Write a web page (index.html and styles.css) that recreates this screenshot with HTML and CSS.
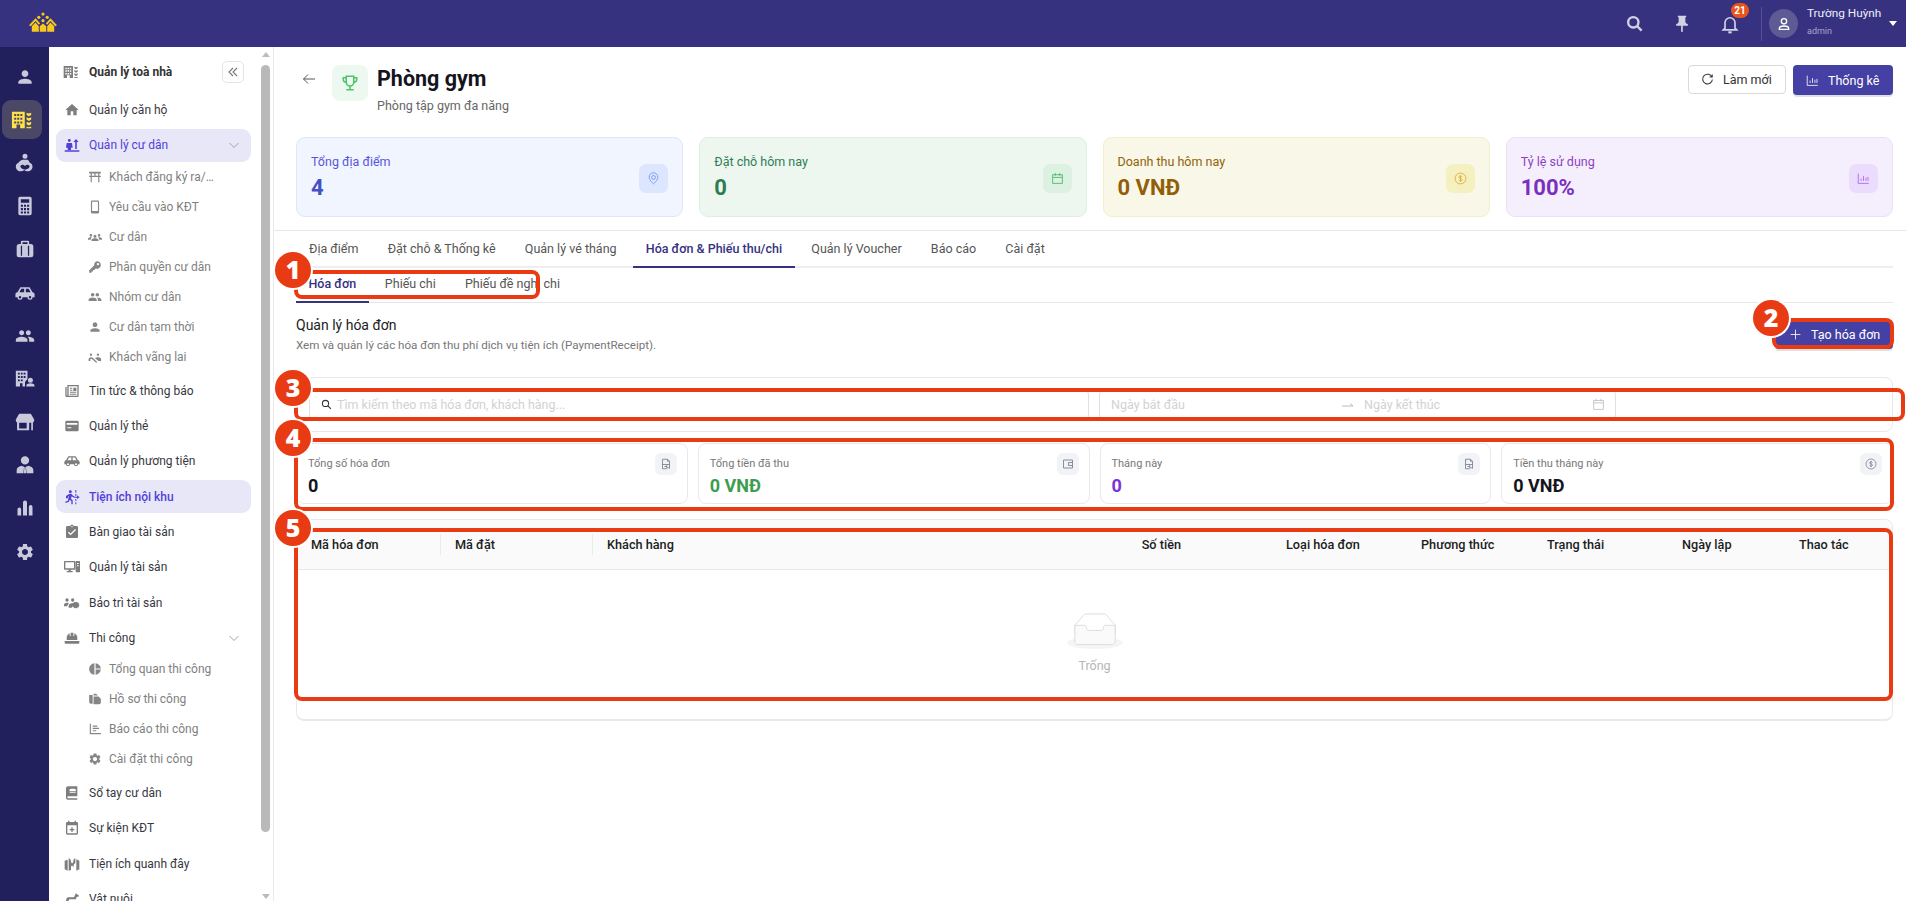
FILE: index.html
```html
<!DOCTYPE html>
<html lang="vi">
<head>
  <meta charset="UTF-8" />
  <meta name="viewport" content="width=device-width, initial-scale=1.0"/>
  <title>Phòng gym</title>
  <link rel="stylesheet" href="styles.css">
</head>
<body>
  <svg class="sprite" xmlns="http://www.w3.org/2000/svg">
    <symbol id="i-person" viewBox="0 0 24 24"><path d="M12 12c2.21 0 4-1.79 4-4s-1.79-4-4-4-4 1.79-4 4 1.79 4 4 4zm0 2c-2.67 0-8 1.34-8 4v2h16v-2c0-2.66-5.33-4-8-4z"/></symbol>
    <symbol id="i-building" viewBox="0 0 24 24"><path fill-rule="evenodd" d="M1 3h14v18h-5v-4H6v4H1zM3.500 5.500v2.200h2.200V5.500zm3.300 0v2.200H9V5.500zm3.400 0v2.200h2.200V5.500zM3.500 9.500v2.200h2.200V9.500zm3.300 0v2.200H9V9.500zm3.400 0v2.200h2.200V9.500zM3.500 13.500v2.200h2.200v-2.200zm3.300 0v2.200H9v-2.200zm3.400 0v2.200h2.200v-2.200z"/><path d="M17 4l2.500 1L22 4v2.500L19.500 8 17 6.500zM17 9l2.500 1L22 9v2.500L19.500 13 17 11.500zM17 14l2.500 1 2.500-1v2.500L19.500 18 17 16.500zM17 19l2.500 1 2.500-1v2h-5z"/></symbol>
    <symbol id="i-mother" viewBox="0 0 24 24"><path fill-rule="evenodd" d="M12 1a3 3 0 1 1 0 6 3 3 0 0 1 0-6zM8.500 8h7c1 1 1.500 2 2 3.500 2 .8 3.500 2.500 3.500 5 0 3-2.500 5.500-5.500 5.500-2 0-3.500-.7-4.500-1.500-1 .8-2.500 1.500-4.500 1.500C3.500 22 1 19.500 1 16.500c0-2.500 1.500-4.200 3.500-5 .7-1.500 2-2.500 4-3.500zM9 14c-1.500 0-2.500 1-2.500 2.200S8 19 12 20c4-1 5.500-2.600 5.500-3.800S16.500 14 15 14c-1.300 0-2.300.7-3 1.700-.7-1-1.700-1.700-3-1.700z"/></symbol>
    <symbol id="i-calc" viewBox="0 0 24 24"><path fill-rule="evenodd" d="M6 1h12a2 2 0 0 1 2 2v18a2 2 0 0 1-2 2H6a2 2 0 0 1-2-2V3a2 2 0 0 1 2-2zm1 3v4h10V4zm0 6.500V13h2.500v-2.500zm3.800 0V13h2.400v-2.500zm3.700 0V13H17v-2.500zM7 14.500V17h2.500v-2.500zm3.800 0V17h2.400v-2.500zm3.700 0V17H17v-2.500zM7 18.500V21h2.500v-2.500zm3.800 0V21h2.400v-2.500zm3.700 0V21H17v-2.500z"/></symbol>
    <symbol id="i-case" viewBox="0 0 24 24"><path fill-rule="evenodd" d="M8.500 2h7A1.500 1.500 0 0 1 17 3.500V6h2a3 3 0 0 1 3 3v10a3 3 0 0 1-3 3H5a3 3 0 0 1-3-3V9a3 3 0 0 1 3-3h2V3.500A1.500 1.500 0 0 1 8.500 2zM9 4v2h6V4zM7 8v12h1.500V8zm8.500 0v12H17V8z"/></symbol>
    <symbol id="i-car" viewBox="0 0 24 24"><path fill-rule="evenodd" d="M6.500 5h11l3.500 6c1.500.3 2.500 1.300 2.500 2.800V17H21a3 3 0 0 1-6 0H9a3 3 0 0 1-6 0H.5v-3.200C.5 12.300 1.500 11.300 3 11zm1 1.800L5.300 11H11V6.800zm5.500 0V11h5.700l-2.200-4.200zM6 15.500a1.500 1.500 0 1 0 0 3 1.500 1.500 0 0 0 0-3zm12 0a1.500 1.500 0 1 0 0 3 1.500 1.500 0 0 0 0-3z"/></symbol>
    <symbol id="i-group" viewBox="0 0 24 24"><path d="M16 11c1.660 0 2.990-1.340 2.990-3S17.660 5 16 5c-1.660 0-3 1.340-3 3s1.340 3 3 3zm-8 0c1.660 0 2.990-1.340 2.990-3S9.660 5 8 5C6.340 5 5 6.340 5 8s1.340 3 3 3zm0 2c-2.330 0-7 1.170-7 3.500V19h14v-2.500c0-2.330-4.670-3.500-7-3.500zm8 0c-.29 0-.62.02-.97.05 1.160.84 1.970 1.970 1.970 3.450V19h6v-2.500c0-2.330-4.670-3.500-7-3.500z"/></symbol>
    <symbol id="i-office" viewBox="0 0 24 24"><path fill-rule="evenodd" d="M1 2h14v10.500c-1.800.6-3 2.300-3 4.500v4H9v-4H6v4H1zM3.500 4.500v2.200h2.200V4.500zm3.500 0v2.200h2.200V4.500zm3.400 0v2.200h2.200V4.500zM3.500 8.500v2.200h2.200V8.500zm3.500 0v2.200h2.200V8.500zm3.400 0v2.200h2.200V8.500zM3.500 12.500v2.200h2.200v-2.200zm3.500 0v2.200h2.200v-2.200z"/><path d="M18.500 10.500a3 3 0 1 1 0 6 3 3 0 0 1 0-6zM13.500 21v-1c0-2 3-2.800 5-2.800s5 .8 5 2.800v1z"/></symbol>
    <symbol id="i-store" viewBox="0 0 24 24"><path fill-rule="evenodd" d="M5 2h14l4 7v1.500a2.500 2.500 0 0 1-1.500 2V22H2.500v-9.500A2.500 2.500 0 0 1 1 10.500V9zM5 13v6.800h9V13zm12 0v9h2.500v-9z"/></symbol>
    <symbol id="i-tie" viewBox="0 0 24 24"><path d="M12 1.500a5 5 0 1 1 0 10 5 5 0 0 1 0-10zM7.500 13l3.500 1-1 8H2v-4c0-2.600 2.800-4.200 5.500-5zM16.500 13c2.700.8 5.500 2.400 5.500 5v4h-8l-1-8zM11.300 14.500h1.400l.8 7.500h-3z"/></symbol>
    <symbol id="i-bars" viewBox="0 0 24 24"><path d="M5.200 11.500A2.200 2.200 0 0 1 7.400 13.700V21H3v-7.300a2.200 2.200 0 0 1 2.200-2.200zM12 3a2.400 2.400 0 0 1 2.400 2.400V21H9.600V5.400A2.400 2.400 0 0 1 12 3zM18.800 8.500A2.200 2.200 0 0 1 21 10.700V21h-4.400V10.700a2.200 2.200 0 0 1 2.200-2.200z"/></symbol>
    <symbol id="i-gear" viewBox="0 0 24 24"><path d="M19.140 12.940c.04-.3.06-.61.06-.94 0-.32-.02-.64-.07-.94l2.030-1.580c.18-.14.23-.41.12-.61l-1.920-3.320c-.12-.22-.37-.29-.59-.22l-2.390.96c-.5-.38-1.030-.7-1.620-.94l-.36-2.540c-.04-.24-.24-.41-.48-.41h-3.840c-.24 0-.43.17-.47.41l-.36 2.540c-.59.24-1.130.57-1.620.94l-2.390-.96c-.22-.08-.47 0-.59.22L2.740 8.870c-.12.21-.08.47.12.61l2.030 1.580c-.05.3-.09.63-.09.94s.02.64.07.94l-2.030 1.580c-.18.14-.23.41-.12.61l1.920 3.320c.12.22.37.29.59.22l2.390-.96c.5.38 1.030.7 1.620.94l.36 2.540c.05.24.24.41.48.41h3.840c.24 0 .44-.17.47-.41l.36-2.540c.59-.24 1.130-.56 1.620-.94l2.390.96c.22.08.47 0 .59-.22l1.920-3.320c.12-.22.07-.47-.12-.61l-2.010-1.580zM12 15.600c-1.980 0-3.600-1.620-3.600-3.600s1.620-3.600 3.600-3.600 3.600 1.620 3.600 3.600-1.620 3.600-3.600 3.600z"/></symbol>
    <symbol id="i-home" viewBox="0 0 24 24"><path d="M10 20v-6h4v6h5v-8h3L12 3 2 12h3v8z"/></symbol>
    <symbol id="i-resident" viewBox="0 0 24 24"><path d="M8 3a2.200 2.200 0 1 1 0 4.400A2.200 2.200 0 0 1 8 3zM4 9h8l1 7h-2.500v3.500h-5V16H3zM18 3l4 4.500h-2.800V18h-2.400V7.500H14zM1 20h22v2H1z"/></symbol>
    <symbol id="i-torii" viewBox="0 0 24 24"><path fill-rule="evenodd" d="M2 3h20v3h-2.500v4H22v2h-2.500v9h-2v-9h-11v9h-2v-9H2v-2h2.500V6H2zm4.500 3v4H11V6zM13 6v4h4.500V6z"/></symbol>
    <symbol id="i-phone" viewBox="0 0 24 24"><path d="M17 1.010L7 1c-1.100 0-2 .9-2 2v18c0 1.100.9 2 2 2h10c1.100 0 2-.9 2-2V3c0-1.100-.9-1.990-2-1.990zM17 19H7V3h10v16z"/></symbol>
    <symbol id="i-people" viewBox="0 0 24 24"><path d="M12 8a2.600 2.600 0 1 1 0 5.200A2.600 2.600 0 0 1 12 8zM5 7a2.200 2.200 0 1 1 0 4.400A2.200 2.200 0 0 1 5 7zM19 7a2.200 2.200 0 1 1 0 4.400A2.200 2.200 0 0 1 19 7zM6 19v-2c0-1.800 3.500-2.800 6-2.800s6 1 6 2.800v2zM0 16.500V15c0-1.400 2.700-2.400 5-2.400.6 0 1.200.1 1.800.2-1.300.8-2 1.800-2 3.700zM24 16.500V15c0-1.400-2.700-2.400-5-2.400-.6 0-1.200.1-1.800.2 1.300.8 2 1.800 2 3.700z"/></symbol>
    <symbol id="i-key" viewBox="0 0 24 24"><path fill-rule="evenodd" d="M15.500 2a6.500 6.500 0 1 1-2.300 12.600L11 17H8.500v2.500H6V22H2v-4l8.800-8.800A6.500 6.500 0 0 1 15.500 2zM17 5a2 2 0 1 0 0 4 2 2 0 0 0 0-4z"/></symbol>
    <symbol id="i-walk" viewBox="0 0 24 24"><path d="M5 6a2 2 0 1 1 0 4 2 2 0 0 1 0-4zM17 6a2 2 0 1 1 0 4 2 2 0 0 1 0-4zM1 19v-3c0-2 2.500-3.500 4.500-3.500 1 0 2 .3 2.700.9L16 21l-2 1-8-7-2 1v3zM12 14c1-1 3-1.500 5-1.500 2.500 0 5.500 1 5.500 3.500v3H18z"/></symbol>
    <symbol id="i-news" viewBox="0 0 24 24"><path fill-rule="evenodd" d="M5 3h17v16a2 2 0 0 1-2 2H4a2 2 0 0 1-2-2V6h2v12.500a.5.500 0 0 0 1 0zm2 2v14h13V5zm7 2h4.500v5H14zM9 7h3.500v1.500H9zm0 3h3.500v1.500H9zm0 3h9.500v1.500H9zm0 3h9.500v1.500H9z"/></symbol>
    <symbol id="i-card" viewBox="0 0 24 24"><path fill-rule="evenodd" d="M4 4h16a2 2 0 0 1 2 2v12a2 2 0 0 1-2 2H4a2 2 0 0 1-2-2V6a2 2 0 0 1 2-2zm0 3.500V10h16V7.500zM5 14v1.500h6V14z"/></symbol>
    <symbol id="i-run" viewBox="0 0 24 24"><path d="M9.500 2a2.200 2.200 0 1 1 0 4.400A2.200 2.200 0 0 1 9.500 2zM7 8l4-1 2.500 3 2 1v2l-3-1.200-1-1-1 4 2.500 2V23h-2v-5l-2.500-2-1 3-5 2-.7-1.800 4-1.700 1.500-7-1.300.7V14H3v-3.500zM17 1.500h1.500v4H17zM17 7.500h1.500v3H17zM17 15h1.500v3H17zM17 20h1.500v3H17zM19.500 9.500l4 2.800-4 2.700V13H15v-1.500h4.500z"/></symbol>
    <symbol id="i-clipboard" viewBox="0 0 24 24"><path d="M19 3h-4.180C14.400 1.840 13.300 1 12 1c-1.300 0-2.400.84-2.820 2H5c-1.100 0-2 .9-2 2v14c0 1.100.9 2 2 2h14c1.100 0 2-.9 2-2V5c0-1.100-.9-2-2-2zm-7 0c.55 0 1 .45 1 1s-.45 1-1 1-1-.45-1-1 .45-1 1-1zm-2 14l-4-4 1.410-1.410L10 14.170l6.590-6.590L18 9l-8 8z"/></symbol>
    <symbol id="i-devices" viewBox="0 0 24 24"><path fill-rule="evenodd" d="M1 3h15a1 1 0 0 1 1 1v11a1 1 0 0 1-1 1H10v2h3v2H4v-2h3v-2H1a1 1 0 0 1-1-1V4a1 1 0 0 1 1-1zm1 2v9h13V5zM18.500 3H23a1 1 0 0 1 1 1v15a1 1 0 0 1-1 1h-4.500a1 1 0 0 1-1-1V4a1 1 0 0 1 1-1zm1 3v1.500h2.500V6zm0 3.500V11h2.500V9.500z"/></symbol>
    <symbol id="i-team" viewBox="0 0 24 24"><path d="M4.500 5a2.500 2.500 0 1 1 0 5 2.500 2.500 0 0 1 0-5zM13 5a2.500 2.500 0 1 1 0 5 2.500 2.500 0 0 1 0-5zM0 17v-2.500c0-2 2.500-3 4.500-3 1 0 2 .2 2.800.6L4.500 17zM7 19v-3c0-2.500 3.500-4 6-4 .8 0 1.800.2 2.700.5L11.500 19zM19.500 10l1 1.700 2 .3-.5 1.800 1.500 1.300-1.500 1.300.5 1.800-2 .3-1 1.700-1.800-1-1.800 1-1-1.700-2-.3.500-1.800-1.500-1.300 1.500-1.300-.5-1.800 2-.3 1-1.700 1.800 1z"/></symbol>
    <symbol id="i-helmet" viewBox="0 0 24 24"><path d="M10 4h4v5h1.500V4.800A8 8 0 0 1 20 12v3H4v-3a8 8 0 0 1 4.500-7.200V9H10zM1 16.500h22V19a1.500 1.500 0 0 1-1.500 1.500h-19A1.500 1.500 0 0 1 1 19z"/></symbol>
    <symbol id="i-pie" viewBox="0 0 24 24"><path d="M11 2v20c-5.070-.5-9-4.790-9-10s3.930-9.500 9-10zm2.030 0v8.990H22c-.47-4.740-4.240-8.520-8.970-8.990zm0 11.010V22c4.740-.47 8.500-4.250 8.970-8.990h-8.970z"/></symbol>
    <symbol id="i-files" viewBox="0 0 24 24"><path d="M2 5h6v15H5a3 3 0 0 1-3-3zM9.500 3H14l3 3H9.500zM9.500 7.500H18l4 4V18a3 3 0 0 1-3 3H9.500z"/></symbol>
    <symbol id="i-report" viewBox="0 0 24 24"><path d="M3 3h2v16h17v2H3zM8 6h8v2H8zM8 10h11v2H8zM8 14h6v2H8z"/></symbol>
    <symbol id="i-book" viewBox="0 0 24 24"><path fill-rule="evenodd" d="M6 2h14v15H6.500a1.500 1.500 0 0 0 0 3H20v2H6a3 3 0 0 1-3-3V5a3 3 0 0 1 3-3zm2.500 8v1.500h9V10zm2-4.500a2.500 2.500 0 0 0-2 3.500h9a2.500 2.500 0 0 0-2-3.500z"/></symbol>
    <symbol id="i-event" viewBox="0 0 24 24"><path fill-rule="evenodd" d="M6 1h2v2h8V1h2v2h1a2 2 0 0 1 2 2v15a2 2 0 0 1-2 2H5a2 2 0 0 1-2-2V5a2 2 0 0 1 2-2h1zM5 8v12h14V8zm6 3h2v2.500h2.500v2H13V18h-2v-2.500H8.500v-2H11z"/></symbol>
    <symbol id="i-map" viewBox="0 0 24 24"><path d="M7 3l3 2.500c0 2 1 4 2 6l2-3V5.500L17 3v8l-2 1-1 5-2-3-1.500 2V21L7 22zM5.500 5.500V22L1 20V7zM18.500 5L23 7v13l-4.500 2z"/></symbol>
    <symbol id="i-pet" viewBox="0 0 24 24"><path d="M18 3l1 2 3 1v2.500h-3l-1 4H8l-3 6H2l2-8 2-1h9z"/></symbol>
    <symbol id="i-pin" viewBox="0 0 24 24"><path d="M16 9V4h1V2H7v2h1v5c0 1.660-1.340 3-3 3v2h5.970v7l1 1 1-1v-7H19v-2c-1.660 0-3-1.340-3-3z"/></symbol>
    <symbol id="i-file" viewBox="0 0 24 24"><path d="M5 2.500h10l4 4V21l-2-1.500h-3.500V13H19M5 2.500V21.500h8.500M5 13h8.500M9 17h4.500M15 2.500V6.500h4" fill="none" stroke="currentColor" stroke-width="1.800"/></symbol>
  </svg>

  <header class="topbar">
    <svg class="logo" viewBox="0 0 30 22">
      <circle cx="15" cy="2" r="1.700"/><circle cx="10.500" cy="5.500" r="1.700"/><circle cx="19.500" cy="5.500" r="1.700"/><circle cx="15" cy="9" r="1.700"/>
      <path d="M0 14L7 6.500 12 12 10.500 13.500 7 9.500 2 15zM30 14L23 6.500 18 12 19.500 13.500 23 9.500 28 15z"/>
      <path d="M3 21v-6l4-4 3.500 4v6zM11.500 21v-6l3.500-3 3.500 3v6zM19.500 21v-6L23 11l4 4v6z"/>
    </svg>
    <div class="topbar-tools">
      <svg class="tool-icon" viewBox="0 0 24 24" fill="none" stroke="currentColor" stroke-width="3"><circle cx="10.500" cy="10.500" r="6.500"/><path d="M15.500 15.500L21 21"/></svg>
      <svg class="tool-icon tool-pin"><use href="#i-pin"/></svg>
      <div class="bell">
        <svg class="tool-icon" viewBox="0 0 24 24" fill="none" stroke="currentColor" stroke-width="2"><path d="M6 17V10.500a6 6 0 0 1 12 0V17l2 2H4z"/><path d="M10 22h4" stroke-width="2.500"/></svg>
        <span class="badge">21</span>
      </div>
      <div class="user">
        <span class="avatar"><svg viewBox="0 0 24 24" fill="none" stroke="currentColor" stroke-width="2"><circle cx="12" cy="8" r="4"/><path d="M5 20v-1.500C5 16 9 15 12 15s7 1 7 3.500V20z"/></svg></span>
        <div class="user-text">
          <div class="user-name">Trường Huỳnh</div>
          <div class="user-role">admin</div>
        </div>
        <span class="caret"></span>
      </div>
    </div>
  </header>

  <div class="layout">
    <nav class="rail">
      <a class="rail-item"><svg><use href="#i-person"/></svg></a>
      <a class="rail-item active"><svg><use href="#i-building"/></svg></a>
      <a class="rail-item"><svg><use href="#i-mother"/></svg></a>
      <a class="rail-item"><svg><use href="#i-calc"/></svg></a>
      <a class="rail-item"><svg><use href="#i-case"/></svg></a>
      <a class="rail-item"><svg><use href="#i-car"/></svg></a>
      <a class="rail-item"><svg><use href="#i-group"/></svg></a>
      <a class="rail-item"><svg><use href="#i-office"/></svg></a>
      <a class="rail-item"><svg><use href="#i-store"/></svg></a>
      <a class="rail-item"><svg><use href="#i-tie"/></svg></a>
      <a class="rail-item"><svg><use href="#i-bars"/></svg></a>
      <a class="rail-item"><svg><use href="#i-gear"/></svg></a>
    </nav>

    <aside class="sidebar">
      <div class="menu">
        <div class="menu-head">
          <svg class="menu-icon head-icon"><use href="#i-building"/></svg>
          <span class="menu-title">Quản lý toà nhà</span>
          <button class="collapse">
            <svg viewBox="0 0 12 12" fill="none" stroke="currentColor" stroke-width="1.100"><path d="M6 2L2 6l4 4M10 2L6 6l4 4"/></svg>
          </button>
        </div>
        <a class="menu-item"><svg class="menu-icon"><use href="#i-home"/></svg>Quản lý căn hộ</a>
        <a class="menu-item active"><svg class="menu-icon"><use href="#i-resident"/></svg>Quản lý cư dân<svg class="chevron" viewBox="0 0 12 12" fill="none" stroke="currentColor"><path d="M1.500 4L6 8.500 10.500 4"/></svg></a>
        <div class="submenu">
          <a class="sub-item"><svg class="menu-icon"><use href="#i-torii"/></svg><span class="sub-label">Khách đăng ký ra/vào</span></a>
          <a class="sub-item"><svg class="menu-icon"><use href="#i-phone"/></svg><span class="sub-label">Yêu cầu vào KĐT</span></a>
          <a class="sub-item"><svg class="menu-icon"><use href="#i-people"/></svg><span class="sub-label">Cư dân</span></a>
          <a class="sub-item"><svg class="menu-icon"><use href="#i-key"/></svg><span class="sub-label">Phân quyền cư dân</span></a>
          <a class="sub-item"><svg class="menu-icon"><use href="#i-group"/></svg><span class="sub-label">Nhóm cư dân</span></a>
          <a class="sub-item"><svg class="menu-icon"><use href="#i-person"/></svg><span class="sub-label">Cư dân tạm thời</span></a>
          <a class="sub-item"><svg class="menu-icon"><use href="#i-walk"/></svg><span class="sub-label">Khách vãng lai</span></a>
        </div>
        <a class="menu-item"><svg class="menu-icon"><use href="#i-news"/></svg>Tin tức &amp; thông báo</a>
        <a class="menu-item"><svg class="menu-icon"><use href="#i-card"/></svg>Quản lý thẻ</a>
        <a class="menu-item"><svg class="menu-icon"><use href="#i-car"/></svg>Quản lý phương tiện</a>
        <a class="menu-item active strong"><svg class="menu-icon"><use href="#i-run"/></svg>Tiện ích nội khu</a>
        <a class="menu-item"><svg class="menu-icon"><use href="#i-clipboard"/></svg>Bàn giao tài sản</a>
        <a class="menu-item"><svg class="menu-icon"><use href="#i-devices"/></svg>Quản lý tài sản</a>
        <a class="menu-item"><svg class="menu-icon"><use href="#i-team"/></svg>Bảo trì tài sản</a>
        <a class="menu-item"><svg class="menu-icon"><use href="#i-helmet"/></svg>Thi công<svg class="chevron" viewBox="0 0 12 12" fill="none" stroke="currentColor"><path d="M1.500 4L6 8.500 10.500 4"/></svg></a>
        <div class="submenu">
          <a class="sub-item"><svg class="menu-icon"><use href="#i-pie"/></svg><span class="sub-label">Tổng quan thi công</span></a>
          <a class="sub-item"><svg class="menu-icon"><use href="#i-files"/></svg><span class="sub-label">Hồ sơ thi công</span></a>
          <a class="sub-item"><svg class="menu-icon"><use href="#i-report"/></svg><span class="sub-label">Báo cáo thi công</span></a>
          <a class="sub-item"><svg class="menu-icon"><use href="#i-gear"/></svg><span class="sub-label">Cài đặt thi công</span></a>
        </div>
        <a class="menu-item"><svg class="menu-icon"><use href="#i-book"/></svg>Sổ tay cư dân</a>
        <a class="menu-item"><svg class="menu-icon"><use href="#i-event"/></svg>Sự kiện KĐT</a>
        <a class="menu-item"><svg class="menu-icon"><use href="#i-map"/></svg>Tiện ích quanh đây</a>
        <a class="menu-item"><svg class="menu-icon"><use href="#i-pet"/></svg>Vật nuôi</a>
      </div>
      <div class="scrollbar">
        <span class="scroll-up"></span>
        <span class="scroll-thumb"></span>
        <span class="scroll-down"></span>
      </div>
    </aside>

    <main class="content">
      <section class="page-top">
        <div class="page-head">
          <svg class="back" viewBox="0 0 16 16" fill="none" stroke="currentColor"><path d="M14 8H2.500M7 3.500L2.500 8 7 12.500"/></svg>
          <span class="head-tile">
            <svg viewBox="0 0 24 24" fill="none" stroke="currentColor" stroke-width="2"><path d="M7 3h10v8a5 5 0 0 1-10 0zM7 5H3v2a4 4 0 0 0 4 4M17 5h4v2a4 4 0 0 1-4 4M12 16v4M7 21h10"/></svg>
          </span>
          <div class="head-text">
            <h1>Phòng gym</h1>
            <p>Phòng tập gym đa năng</p>
          </div>
          <div class="head-actions">
            <button class="btn btn-plain">
              <svg viewBox="0 0 16 16" fill="none" stroke="currentColor" stroke-width="1.300"><path d="M13.500 5A6 6 0 1 0 14 8M13.800 1.800V5h-3.200"/></svg>Làm mới
            </button>
            <button class="btn btn-primary">
              <svg viewBox="0 0 16 16" fill="none" stroke="currentColor"><path d="M1.500 2v12h13M5 11V8M8 11V5M11 11V7M13.500 11V6"/></svg>Thống kê
            </button>
          </div>
        </div>

        <div class="stat-grid">
          <div class="stat blue">
            <div><div class="stat-label">Tổng địa điểm</div><div class="stat-value">4</div></div>
            <span class="stat-tile"><svg viewBox="0 0 24 24" fill="none" stroke="currentColor" stroke-width="1.600"><path d="M12 22s-8-7-8-12.500a8 8 0 0 1 16 0C20 15 12 22 12 22z"/><circle cx="12" cy="10" r="3.500"/></svg></span>
          </div>
          <div class="stat green">
            <div><div class="stat-label">Đặt chỗ hôm nay</div><div class="stat-value">0</div></div>
            <span class="stat-tile"><svg viewBox="0 0 24 24" fill="none" stroke="currentColor" stroke-width="1.600"><path d="M3 5h18v16H3zM3 10h18M8 2v5M16 2v5"/></svg></span>
          </div>
          <div class="stat yellow">
            <div><div class="stat-label">Doanh thu hôm nay</div><div class="stat-value">0 VNĐ</div></div>
            <span class="stat-tile"><svg viewBox="0 0 24 24" fill="none" stroke="currentColor" stroke-width="1.600"><circle cx="12" cy="12" r="10"/><path d="M15 9c-.5-1-1.500-1.500-3-1.500-1.800 0-3 .9-3 2.200 0 3 6 1.600 6 4.500 0 1.300-1.200 2.300-3 2.300-1.500 0-2.600-.6-3-1.600M12 6v12"/></svg></span>
          </div>
          <div class="stat purple">
            <div><div class="stat-label">Tỷ lệ sử dụng</div><div class="stat-value">100%</div></div>
            <span class="stat-tile"><svg viewBox="0 0 16 16" fill="none" stroke="currentColor"><path d="M1.500 2v12h13M5 11V8M8 11V5M11 11V7M13.500 11V6"/></svg></span>
          </div>
        </div>
      </section>

      <section class="tab-body">
        <div class="tabs">
          <a class="tab">Địa điểm</a>
          <a class="tab">Đặt chỗ &amp; Thống kê</a>
          <a class="tab">Quản lý vé tháng</a>
          <a class="tab active">Hóa đơn &amp; Phiếu thu/chi</a>
          <a class="tab">Quản lý Voucher</a>
          <a class="tab">Báo cáo</a>
          <a class="tab">Cài đặt</a>
        </div>
        <div class="subtabs">
          <a class="tab active">Hóa đơn</a>
          <a class="tab">Phiếu chi</a>
          <a class="tab">Phiếu đề nghị chi</a>
        </div>

        <div class="section-head">
          <div>
            <h2>Quản lý hóa đơn</h2>
            <p>Xem và quản lý các hóa đơn thu phí dịch vụ tiện ích (PaymentReceipt).</p>
          </div>
          <button class="btn btn-primary btn-create">
            <svg viewBox="0 0 16 16" fill="none" stroke="currentColor"><path d="M8 2v12M2 8h12"/></svg>Tạo hóa đơn
          </button>
        </div>

        <div class="filters">
          <div class="field field-search">
            <svg viewBox="0 0 16 16" fill="none" stroke="#333" stroke-width="1.500"><circle cx="6.500" cy="6.500" r="4.500"/><path d="M10 10l4.500 4.500"/></svg>
            <span>Tìm kiếm theo mã hóa đơn, khách hàng...</span>
          </div>
          <div class="field field-date">
            <span class="date-from">Ngày bắt đầu</span>
            <svg class="date-arrow" viewBox="0 0 12 8" fill="none" stroke="currentColor"><path d="M0 5h11M8 2.500L11 5"/></svg>
            <span class="date-to">Ngày kết thúc</span>
            <svg class="date-icon" viewBox="0 0 16 16" fill="none" stroke="currentColor"><path d="M2 3h12v11H2zM2 6h12M5 1v3M11 1v3"/></svg>
          </div>
        </div>

        <div class="totals">
          <div class="total">
            <div><div class="total-label">Tổng số hóa đơn</div><div class="total-value">0</div></div>
            <span class="total-tile"><svg><use href="#i-file"/></svg></span>
          </div>
          <div class="total">
            <div><div class="total-label">Tổng tiền đã thu</div><div class="total-value green-text">0 VNĐ</div></div>
            <span class="total-tile"><svg viewBox="0 0 24 24" fill="none" stroke="currentColor" stroke-width="1.800"><path d="M3 4h18v16H3zM21 9h-8v6h8M16 12h.5"/></svg></span>
          </div>
          <div class="total">
            <div><div class="total-label">Tháng này</div><div class="total-value purple-text">0</div></div>
            <span class="total-tile"><svg><use href="#i-file"/></svg></span>
          </div>
          <div class="total">
            <div><div class="total-label">Tiền thu tháng này</div><div class="total-value">0 VNĐ</div></div>
            <span class="total-tile"><svg viewBox="0 0 24 24" fill="none" stroke="currentColor" stroke-width="1.600"><circle cx="12" cy="12" r="10"/><path d="M15 9c-.5-1-1.500-1.500-3-1.500-1.800 0-3 .9-3 2.200 0 3 6 1.600 6 4.500 0 1.300-1.200 2.300-3 2.300-1.500 0-2.600-.6-3-1.600M12 6v12"/></svg></span>
          </div>
        </div>

        <div class="table">
          <div class="table-head">
            <div class="th sep">Mã hóa đơn</div>
            <div class="th sep">Mã đặt</div>
            <div class="th">Khách hàng</div>
            <div class="th th-money">Số tiền</div>
            <div class="th">Loại hóa đơn</div>
            <div class="th">Phương thức</div>
            <div class="th">Trạng thái</div>
            <div class="th">Ngày lập</div>
            <div class="th">Thao tác</div>
          </div>
          <div class="empty">
            <svg viewBox="0 0 64 41" xmlns="http://www.w3.org/2000/svg">
              <g transform="translate(0 1)" fill="none" fill-rule="evenodd">
                <ellipse fill="#f5f5f5" cx="32" cy="33" rx="32" ry="7"/>
                <g fill-rule="nonzero" stroke="#d9d9d9">
                  <path d="M55 12.760L44.854 1.258C44.367.474 43.656 0 42.907 0H21.093c-.749 0-1.460.474-1.947 1.257L9 12.761V22h46v-9.240z"/>
                  <path d="M41.613 15.931c0-1.605.994-2.930 2.227-2.931H55v18.137C55 33.260 53.680 35 52.050 35h-40.100C10.320 35 9 33.259 9 31.137V13h11.160c1.233 0 2.227 1.323 2.227 2.928v.022c0 1.605 1.005 2.901 2.237 2.901h14.752c1.232 0 2.237-1.308 2.237-2.913v-.007z" fill="#fafafa"/>
                </g>
              </g>
            </svg>
            <span>Trống</span>
          </div>
        </div>
      </section>
    </main>
  </div>

  <!-- numbered callouts drawn on top of the screen -->
  <div class="mark-box box-1"></div>
  <div class="mark-box box-2"></div>
  <div class="mark-box box-3"></div>
  <div class="mark-box box-4"></div>
  <div class="mark-box box-5"></div>
  <div class="mark-dot dot-1">1</div>
  <div class="mark-dot dot-2">2</div>
  <div class="mark-dot dot-3">3</div>
  <div class="mark-dot dot-4">4</div>
  <div class="mark-dot dot-5">5</div>
</body>
</html>
```

FILE: styles.css
```css
* {
  box-sizing: border-box;
}

html, body {
  margin: 0;
  height: 100%;
  overflow: hidden;
}

body {
  font-family: Roboto, "Noto Sans", sans-serif;
  font-size: 12.5px;
  color: #333;
  background: #fff;
  display: flex;
  flex-direction: column;
}

.sprite {
  display: none;
}

h1, h2, p {
  margin: 0;
}

/* top bar */
.topbar {
  height: 47px;
  flex: none;
  background: #363280;
  display: flex;
  align-items: center;
  justify-content: space-between;
}

.logo {
  width: 28px;
  height: 21px;
  margin: 0 0 3px 29px;
  fill: #f7c91c;
}

.topbar-tools {
  display: flex;
  align-items: center;
  color: #d3d2e4;
}

.tool-icon {
  display: block;
  width: 19px;
  height: 19px;
  margin-right: 28px;
}

.tool-pin {
  width: 20px;
  height: 20px;
  fill: currentColor;
}

.bell {
  position: relative;
  margin-right: 0;
}

.bell .tool-icon {
  margin-right: 21px;
  width: 20px;
  height: 20px;
}

.badge {
  position: absolute;
  top: -11px;
  left: 11px;
  width: 18px;
  height: 15px;
  border-radius: 8px;
  background: #e8541c;
  color: #fff;
  font-size: 10px;
  font-weight: 700;
  line-height: 15px;
  text-align: center;
}

.user {
  height: 34px;
  border-left: 1px solid #55529a;
  padding-left: 7px;
  display: flex;
  align-items: center;
}

.avatar {
  width: 29px;
  height: 29px;
  border-radius: 50%;
  background: #5d5a94;
  color: #fff;
  display: flex;
  align-items: center;
  justify-content: center;
  margin-right: 9px;
}

.avatar svg {
  width: 16px;
  height: 16px;
}

.user-text {
  width: 78px;
}

.user-name {
  font-size: 11.8px;
  line-height: 14px;
  color: #eeeef6;
  margin-top: -4px;
  white-space: nowrap;
}

.user-role {
  font-size: 9px;
  line-height: 12px;
  margin-top: 5px;
  color: #a9a7ca;
}

.caret {
  width: 0;
  height: 0;
  border-left: 4.5px solid transparent;
  border-right: 4.5px solid transparent;
  border-top: 5px solid #fff;
  margin: 0 9px 0 4px;
}

/* page frame */
.layout {
  flex: 1;
  min-height: 0;
  display: flex;
}

.rail {
  width: 49px;
  flex: none;
  background: #211f5c;
  padding-top: 8px;
}

.rail-item {
  display: flex;
  align-items: center;
  justify-content: center;
  height: 43.2px;
  color: #c9c9dc;
}

.rail-item svg {
  width: 20px;
  height: 20px;
  fill: currentColor;
}

.rail-item.active {
  color: #ffe14d;
  background: #4a4866;
  width: 40px;
  height: 39px;
  margin: 2px 0 2.2px 2px;
  border-radius: 9px;
}

.rail-item.active svg {
  width: 22px;
  height: 22px;
}

/* sidebar menu */
.sidebar {
  width: 224px;
  flex: none;
  display: flex;
  overflow: hidden;
}

.menu {
  width: 212px;
  flex: none;
  padding: 9px 10px 0 7px;
}

.menu-head {
  height: 32px;
  display: flex;
  align-items: center;
  padding-left: 7px;
  margin-bottom: 5.7px;
}

.menu-title {
  font-size: 12px;
  font-weight: 700;
  color: #333;
  flex: 1;
}

.head-icon {
  fill: #333;
}

.collapse {
  width: 22px;
  height: 22px;
  padding: 0;
  margin-right: 7px;
  background: #fff;
  border: 1px solid #e4e4e4;
  border-radius: 5px;
  color: #777;
  display: flex;
  align-items: center;
  justify-content: center;
}

.collapse svg {
  width: 12px;
  height: 12px;
}

.menu-icon {
  width: 16px;
  height: 16px;
  flex: none;
  fill: #7d7d7d;
  margin-right: 9px;
}

.menu-head .menu-icon {
  margin-right: 10px;
}

.menu-item {
  height: 33px;
  margin-bottom: 2.3px;
  padding-left: 8px;
  border-radius: 9px;
  display: flex;
  align-items: center;
  white-space: nowrap;
  font-size: 12px;
  color: #37373f;
}

.menu-item.active {
  background: #e8e7f8;
  color: #5140d8;
}

.menu-item.active .menu-icon {
  fill: #5140d8;
}

.menu-item.strong {
  font-weight: 500;
}

.chevron {
  width: 12px;
  height: 12px;
  margin-left: auto;
  margin-right: 11px;
  color: #a5a5a5;
}

.submenu {
  margin: -2.3px 0 2.3px;
}

.sub-item {
  height: 30px;
  padding-left: 32px;
  display: flex;
  align-items: center;
  font-size: 12px;
  color: #7f7f7f;
}

.sub-item .menu-icon {
  width: 14px;
  height: 14px;
  margin-right: 7px;
  fill: #868686;
}

.sub-label {
  width: 108px;
  overflow: hidden;
  white-space: nowrap;
  text-overflow: ellipsis;
}

.scrollbar {
  width: 9px;
  flex: none;
  display: flex;
  flex-direction: column;
  align-items: center;
  padding-top: 5px;
  height: 100%;
}

.scroll-up {
  border-left: 4.5px solid transparent;
  border-right: 4.5px solid transparent;
  border-bottom: 5px solid #bbb;
}

.scroll-thumb {
  width: 9px;
  height: 767px;
  margin-top: 8px;
  background: #b9b9b9;
  border-radius: 5px;
}

.scroll-down {
  margin-top: 62px;
  border-left: 4.5px solid transparent;
  border-right: 4.5px solid transparent;
  border-top: 5px solid #bbb;
}

/* main content */
.content {
  flex: 1;
  min-width: 0;
  border-left: 1px solid #eaeaea;
}

.page-top {
  height: 184px;
  padding: 18px 13px 0 22px;
  border-bottom: 1px solid #e6e6e6;
}

.page-head {
  display: flex;
  align-items: flex-start;
  height: 72px;
}

.back {
  width: 16px;
  height: 16px;
  margin: 6px 15px 0 5px;
  color: #555;
}

.head-tile {
  width: 36px;
  height: 36px;
  border-radius: 8px;
  background: #edf8f0;
  color: #4cc46a;
  display: flex;
  align-items: center;
  justify-content: center;
  margin-right: 9px;
}

.head-tile svg {
  width: 18px;
  height: 18px;
}

.head-text {
  padding-top: 1px;
}

.head-text h1 {
  font-size: 21.5px;
  line-height: 26px;
  font-weight: 700;
  color: #14141c;
}

.head-text p {
  font-size: 12.5px;
  line-height: 18px;
  margin-top: 5px;
  color: #666;
}

.head-actions {
  margin-left: auto;
  display: flex;
  gap: 7px;
}

.btn {
  height: 30px;
  border-radius: 4px;
  font-family: inherit;
  font-size: 12.5px;
  display: flex;
  align-items: center;
  cursor: pointer;
}

.btn svg {
  width: 13px;
  height: 13px;
  flex: none;
}

.btn-plain {
  width: 98px;
  height: 29px;
  padding: 0 0 0 12px;
  gap: 9px;
  background: #fff;
  border: 1px solid #d9d9d9;
  color: #333;
}

.btn-primary {
  width: 100px;
  padding: 0 0 0 13px;
  gap: 9px;
  background: #4540a3;
  border: none;
  color: #fff;
  box-shadow: 0 2px 0 rgba(0, 0, 0, 0.12);
}

.stat-grid {
  display: grid;
  grid-template-columns: repeat(4, 1fr);
  gap: 16px;
}

.stat {
  height: 80px;
  border: 1px solid;
  border-radius: 9px;
  padding: 2px 14px 0 14px;
  display: flex;
  align-items: center;
  justify-content: space-between;
}

.stat-label {
  font-size: 12.5px;
  line-height: 18px;
}

.stat-value {
  font-size: 22px;
  line-height: 30px;
  font-weight: 700;
  margin-top: 2px;
}

.stat-tile {
  width: 29px;
  height: 29px;
  border-radius: 7px;
  display: flex;
  align-items: center;
  justify-content: center;
}

.stat-tile svg {
  width: 13px;
  height: 13px;
}

.blue { background: #f0f5ff; border-color: #dfe6fb; }
.blue .stat-label { color: #5a55d8; }
.blue .stat-value { color: #4350c8; }
.blue .stat-tile { background: #dde6ff; color: #6d8ff0; }

.green { background: #edf7ef; border-color: #dcefe1; }
.green .stat-label { color: #2e7d56; }
.green .stat-value { color: #2e7d50; }
.green .stat-tile { background: #dcf1e1; color: #48b86c; }

.yellow { background: #f9f7e8; border-color: #f3eecb; }
.yellow .stat-label { color: #8f6408; }
.yellow .stat-value { color: #925f08; }
.yellow .stat-tile { background: #f5f0c0; color: #e0a92e; }

.purple { background: #f5effd; border-color: #ebdffa; }
.purple .stat-label { color: #8b3fc2; }
.purple .stat-value { color: #7b2fbd; }
.purple .stat-tile { background: #ebdcfd; color: #a860ea; }

/* tabs and invoice panel */
.tab-body {
  padding: 0 13px 0 22px;
}

.tabs,
.subtabs {
  display: flex;
  gap: 3.2px;
}

.tabs {
  height: 37px;
  border-bottom: 2px solid #eee;
}

.subtabs {
  height: 35px;
  border-bottom: 1px solid #e6e6e6;
}

.tab {
  padding: 0 13px;
  color: #555;
  white-space: nowrap;
}

.tabs .tab {
  height: 37px;
  line-height: 35px;
}

.subtabs .tab {
  height: 35px;
  line-height: 32px;
}

.subtabs .tab.active {
  padding: 0 12.5px;
}

.tab.active {
  color: #363280;
  font-weight: 500;
  border-bottom: 2px solid #363280;
}

.section-head {
  display: flex;
  justify-content: space-between;
  align-items: flex-start;
  padding-top: 12px;
}

.section-head h2 {
  font-size: 14px;
  line-height: 20px;
  font-weight: 400;
  color: #222;
}

.section-head p {
  font-size: 11.6px;
  line-height: 18px;
  margin-top: 1px;
  color: #777;
}

.btn-create {
  width: 118px;
  height: 29px;
  margin-top: 5px;
  padding-left: 14px;
}

.filters {
  height: 55px;
  margin-top: 23px;
  padding: 0 12px;
  border: 1px solid #e8e8e8;
  border-radius: 8px;
  display: flex;
  align-items: center;
  gap: 10px;
}

.field {
  height: 32px;
  border: 1px solid #e0e0e0;
  border-radius: 6px;
  display: flex;
  align-items: center;
  color: #d2d2d2;
}

.field-search {
  width: 780px;
  padding-left: 11px;
  gap: 5px;
}

.field-search svg {
  width: 11px;
  height: 11px;
}

.field-date {
  width: 517px;
  padding-left: 11px;
}

.date-from {
  width: 231px;
}

.date-arrow {
  width: 12px;
  height: 8px;
  color: #bbb;
}

.date-to {
  margin-left: 10px;
}

.date-icon {
  width: 13px;
  height: 13px;
  margin-left: auto;
  margin-right: 10px;
  color: #bbb;
}

.totals {
  display: grid;
  grid-template-columns: repeat(4, 1fr);
  gap: 10px;
  margin-top: 11px;
}

.total {
  height: 61px;
  border: 1px solid #e8e8ee;
  border-radius: 8px;
  padding: 9px 10px 0 11px;
  display: flex;
  justify-content: space-between;
  align-items: flex-start;
}

.total-label {
  font-size: 11px;
  line-height: 16px;
  margin-top: 3px;
  color: #777;
}

.total-value {
  font-size: 18px;
  line-height: 24px;
  margin-top: 2px;
  font-weight: 700;
  color: #14141c;
}

.green-text { color: #3c9d4e; }
.purple-text { color: #7b30d8; }

.total-tile {
  width: 22px;
  height: 22px;
  border-radius: 6px;
  background: #f2f3f6;
  color: #7e8494;
  display: flex;
  align-items: center;
  justify-content: center;
}

.total-tile svg {
  width: 12px;
  height: 12px;
  fill: none;
}

.table {
  margin-top: 15px;
  height: 202px;
  border: 1px solid #eaeaea;
  border-bottom-width: 2px;
  border-radius: 8px;
  overflow: hidden;
}

.table-head {
  height: 50px;
  background: #fafafa;
  border-bottom: 1px solid #e8e8e8;
  display: grid;
  grid-template-columns: 144px 152px 437px 242px 135px 126px 135px 117px 1fr;
  align-items: center;
}

.th {
  padding-left: 14px;
  font-weight: 500;
  font-size: 12.7px;
  color: #1c1c24;
  line-height: 21px;
  white-space: nowrap;
}

.sep {
  border-right: 1px solid #ebebeb;
}

.th-money {
  text-align: right;
  padding-right: 91px;
}

.empty {
  display: flex;
  flex-direction: column;
  align-items: center;
  padding-top: 43px;
  color: #b5b5b5;
}

.empty svg {
  width: 56px;
  height: 36px;
  margin-bottom: 9px;
}

/* numbered callouts */
.mark-box {
  position: absolute;
  border: 4px solid #e83b14;
  border-radius: 8px;
}

.box-1 { left: 294px; top: 270px; width: 246px; height: 29px; }
.box-2 { left: 1772px; top: 318px; width: 122px; height: 31px; }
.box-3 { left: 294px; top: 388px; width: 1611px; height: 33px; }
.box-4 { left: 294px; top: 438px; width: 1600px; height: 73px; }
.box-5 { left: 294px; top: 528px; width: 1599px; height: 173px; }

.mark-dot {
  position: absolute;
  width: 36px;
  height: 36px;
  border-radius: 50%;
  background: #e83b14;
  box-shadow: 0 0 0 2px #fff;
  color: #fff;
  font-family: "Open Sans", sans-serif;
  font-size: 25px;
  font-weight: 800;
  line-height: 35px;
  text-align: center;
}

.dot-1 { left: 275px; top: 252px; }
.dot-2 { left: 1753px; top: 300px; }
.dot-3 { left: 275px; top: 370px; }
.dot-4 { left: 275px; top: 420px; }
.dot-5 { left: 275px; top: 510px; }
```
